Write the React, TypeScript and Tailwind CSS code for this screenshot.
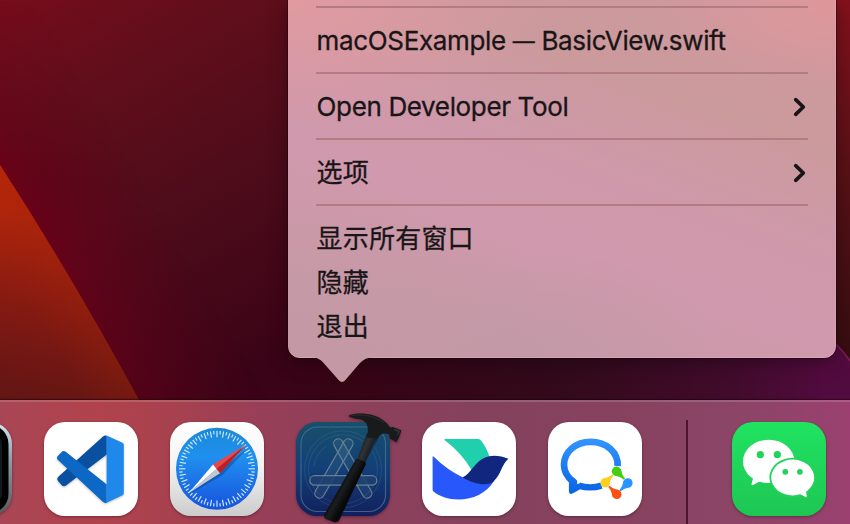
import type { ReactNode } from "react";

function Wallpaper() {
  return (
    <svg className="absolute inset-0" width="850" height="524" viewBox="0 0 850 524" aria-hidden="true">
      <defs>
        <linearGradient id="wall" gradientUnits="userSpaceOnUse" x1="0" y1="0" x2="230" y2="390">
          <stop offset="0" stopColor="#760c1c" />
          <stop offset="0.25" stopColor="#620e1b" />
          <stop offset="0.6" stopColor="#4e0c1a" />
          <stop offset="1" stopColor="#3a0317" />
        </linearGradient>
        <linearGradient id="crimson" gradientUnits="userSpaceOnUse" x1="50" y1="268" x2="155" y2="206">
          <stop offset="0" stopColor="#6c0019" stopOpacity="0.9" />
          <stop offset="1" stopColor="#5a0018" stopOpacity="0" />
        </linearGradient>
        <linearGradient id="crimsonMask" x1="0" y1="0" x2="0" y2="1">
          <stop offset="0" stopColor="#000" />
          <stop offset="0.4" stopColor="#fff" />
          <stop offset="0.6" stopColor="#fff" />
          <stop offset="1" stopColor="#888" />
        </linearGradient>
        <mask id="crimsonFade">
          <rect width="300" height="402" fill="url(#crimsonMask)" />
        </mask>
        <linearGradient id="orange" gradientUnits="userSpaceOnUse" x1="40" y1="215" x2="-10" y2="400">
          <stop offset="0" stopColor="#b92809" />
          <stop offset="0.5" stopColor="#8c1a13" />
          <stop offset="1" stopColor="#54121b" />
        </linearGradient>
        <linearGradient id="orangeLight" gradientUnits="userSpaceOnUse" x1="70" y1="275" x2="25" y2="303">
          <stop offset="0" stopColor="#b0240a" stopOpacity="0.6" />
          <stop offset="1" stopColor="#a02010" stopOpacity="0" />
        </linearGradient>
        <linearGradient id="orangeDark" gradientUnits="userSpaceOnUse" x1="0" y1="180" x2="130" y2="400">
          <stop offset="0" stopColor="#7c1a10" stopOpacity="0" />
          <stop offset="1" stopColor="#6a180f" stopOpacity="0.65" />
        </linearGradient>
        <linearGradient id="bottomStrip" gradientUnits="userSpaceOnUse" x1="288" y1="0" x2="850" y2="0">
          <stop offset="0" stopColor="#350415" stopOpacity="0" />
          <stop offset="0.1" stopColor="#350415" />
          <stop offset="0.5" stopColor="#330a1b" />
          <stop offset="0.8" stopColor="#420b2c" />
          <stop offset="1" stopColor="#560b43" />
        </linearGradient>
        <linearGradient id="rightStrip" x1="0" y1="0" x2="0" y2="1">
          <stop offset="0" stopColor="#84111d" />
          <stop offset="0.5" stopColor="#561116" />
          <stop offset="1" stopColor="#360d11" />
        </linearGradient>
      </defs>
      <rect width="850" height="524" fill="url(#wall)" />
      <rect width="300" height="402" fill="url(#crimson)" mask="url(#crimsonFade)" />
      <path d="M0 165 Q70 273 140 402 H0Z" fill="url(#orange)" />
      <path d="M0 165 Q70 273 140 402 H0Z" fill="url(#orangeLight)" />
      <path d="M0 165 Q70 273 140 402 H0Z" fill="url(#orangeDark)" />
      <rect x="288" y="340" width="562" height="70" fill="url(#bottomStrip)" />
      <rect x="820" width="30" height="362" fill="url(#rightStrip)" />
      <path d="M820 328 Q836 343 850 361 V402 H820Z" fill="#520b3e" />
      <path d="M834 342 Q843 351 851 362" fill="none" stroke="#831a5c" strokeWidth="1.6" />
    </svg>
  );
}

function Separator() {
  return (
    <div className="h-[22px] shrink-0 pt-[9px]">
      <div className="h-0.5 bg-[#b47b83]" />
    </div>
  );
}

function MenuRow({ children, submenu = false }: { children: ReactNode; submenu?: boolean }) {
  return (
    <div className="flex h-11 shrink-0 items-center justify-between whitespace-nowrap">
      <span className="pl-[0.6px]">{children}</span>
      {submenu && (
        <svg width="14" height="20" viewBox="0 0 14 20" className="mr-px" aria-hidden="true">
          <path d="M2.7 2.7 L10.3 10 L2.7 17.3" fill="none" stroke="#191517" strokeWidth="3.7" strokeLinecap="round" strokeLinejoin="round" />
        </svg>
      )}
    </div>
  );
}

function ContextMenu() {
  return (
    <div className="relative ml-[288px] flex h-[358px] w-[548px] flex-col rounded-b-[12px] bg-[radial-gradient(ellipse_260px_130px_at_0%_0%,#e19aa0_0%,#e19aa000_100%),radial-gradient(ellipse_180px_90px_at_100%_0%,#de979b_0%,#de979b00_100%),radial-gradient(ellipse_300px_170px_at_0%_100%,#c499a5_20%,#c499a500_100%),radial-gradient(ellipse_220px_110px_at_42%_100%,#c299a8_0%,#c299a800_100%),linear-gradient(20deg,#c799a5_0%,#d099ad_38%,#cf99ab_52%,#cb9a9d_72%,#cf999e_100%)] shadow-[0_0_0_1px_rgba(20,0,8,0.4),0_4px_20px_rgba(0,0,0,0.36),inset_0_-1px_0_rgba(255,220,230,0.2),inset_-1px_0_0_rgba(255,220,230,0.15)]">
      <svg className="absolute left-[24px] top-[357px]" width="62" height="27" viewBox="0 0 62 27" aria-hidden="true">
        <path d="M0 0 C6 .6 9 3 12 6.5 L26.6 23 Q30 27 33.4 23 L47.5 6.5 C51 2.7 55 .6 61 0Z" fill="#c499a5" />
      </svg>
      <div className="-mt-[3px] flex flex-col px-7 font-['Inter','Noto_Sans_CJK_SC',sans-serif] text-[26px] leading-[44px] text-[#191517] [-webkit-text-stroke:0.3px_#191517]">
        <Separator />
        <MenuRow>
          <span className="flex tracking-[-0.35px]">
            <span>macOSExample</span>
            <span className="mx-[7px] text-[22px]">—</span>
            <span>BasicView.swift</span>
          </span>
        </MenuRow>
        <Separator />
        <MenuRow submenu>
          <span className="tracking-[-0.36px]">Open Developer Tool</span>
        </MenuRow>
        <Separator />
        <MenuRow submenu>
          <span className="tracking-[0.2px]">选项</span>
        </MenuRow>
        <Separator />
        <MenuRow>
          <span className="tracking-[0.2px]">显示所有窗口</span>
        </MenuRow>
        <MenuRow>
          <span className="tracking-[0.2px]">隐藏</span>
        </MenuRow>
        <MenuRow>
          <span className="tracking-[0.2px]">退出</span>
        </MenuRow>
      </div>
    </div>
  );
}

const iconClass = "block shrink-0 overflow-visible drop-shadow-[0_1px_1.5px_rgba(30,0,15,0.4)]";

function PhoneIcon() {
  return (
    <svg className={iconClass} width="94" height="94" viewBox="0 0 94 94" aria-hidden="true">
      <defs>
        <linearGradient id="bezel" x1="0" y1="0" x2="0" y2="1">
          <stop offset="0" stopColor="#d3e7f0" />
          <stop offset="0.4" stopColor="#8f9da5" />
          <stop offset="1" stopColor="#55575b" />
        </linearGradient>
      </defs>
      <rect width="94" height="94" rx="22" fill="url(#bezel)" />
      <rect x="3" y="3" width="87.5" height="88" rx="19" fill="#000" />
      <rect x="9" y="9" width="75" height="76" rx="14" fill="#11191d" />
    </svg>
  );
}

function CodeIcon() {
  return (
    <svg className={iconClass} width="94" height="94" viewBox="0 0 94 94" aria-hidden="true">
      <rect width="94" height="94" rx="21" fill="#fff" />
      <g className="drop-shadow-[0_1px_1px_rgba(0,0,0,0.25)]">
        <path d="M62.8 13.8 Q60.8 13 59 14.6 L14 55 Q12.3 57 14 59 L18 63.5 Q20 65 22 63.5 L62.8 32.5Z" fill="#0a50a0" />
        <path d="M22 30 Q19.5 28.2 17.7 30 L13.8 34 Q12 36 14 38 L58.5 79.4 Q60.5 81.4 62.8 80.7 V62.5Z" fill="#0c67c5" />
        <path d="M62.6 13.6 L78.5 20.8 Q79.8 21.5 79.8 23 V71 Q79.8 72.6 78.5 73.3 L62.6 80.8Z" fill="#1f89eb" />
      </g>
    </svg>
  );
}

const ticks = Array.from({ length: 72 }, (_, i) => i);

function SafariIcon() {
  return (
    <svg className={iconClass} width="94" height="94" viewBox="0 0 94 94" aria-hidden="true">
      <defs>
        <linearGradient id="safariPlate" x1="0" y1="0" x2="0" y2="1">
          <stop offset="0" stopColor="#fff" />
          <stop offset="0.45" stopColor="#f4f4f4" />
          <stop offset="1" stopColor="#cccccd" />
        </linearGradient>
        <linearGradient id="safariDial" x1="0" y1="0" x2="0" y2="1">
          <stop offset="0" stopColor="#1b88d6" />
          <stop offset="0.35" stopColor="#2090ef" />
          <stop offset="1" stopColor="#1752dd" />
        </linearGradient>
      </defs>
      <rect width="94" height="94" rx="21" fill="url(#safariPlate)" />
      <circle cx="47" cy="46.8" r="41" fill="url(#safariDial)" />
      {ticks.map((i) => (
        <line
          key={i}
          x1="47"
          x2="47"
          y1="8.9"
          y2={i % 2 ? 12.2 : 15.2}
          stroke="#d0ebff"
          strokeWidth="1.15"
          transform={`rotate(${i * 5} 47 46.8)`}
        />
      ))}
      <path d="M21 71.5 L52.5 53 L79 25Z" fill="#062c70" opacity="0.35" />
      <path d="M76.3 22.6 L43 42.6 L46.6 47Z" fill="#ef4542" />
      <path d="M76.3 22.6 L46.6 47 L50 51.2Z" fill="#c21d1f" />
      <path d="M18.8 70.9 L43 42.6 L46.6 47Z" fill="#fff" />
      <path d="M18.8 70.9 L46.6 47 L50 51.2Z" fill="#c5c9cf" />
    </svg>
  );
}

function XcodeIcon() {
  return (
    <svg className={iconClass} width="94" height="94" viewBox="0 0 94 94" aria-hidden="true">
      <defs>
        <linearGradient id="xcodePlate" x1="0" y1="0" x2="0" y2="1">
          <stop offset="0" stopColor="#18506a" />
          <stop offset="0.5" stopColor="#123f78" />
          <stop offset="1" stopColor="#131f5c" />
        </linearGradient>
        <linearGradient id="steel" gradientUnits="userSpaceOnUse" x1="64" y1="20" x2="78" y2="26">
          <stop offset="0" stopColor="#161719" />
          <stop offset="0.45" stopColor="#303337" />
          <stop offset="1" stopColor="#141517" />
        </linearGradient>
        <linearGradient id="grip" gradientUnits="userSpaceOnUse" x1="45" y1="60" x2="56" y2="66">
          <stop offset="0" stopColor="#0b0c0e" />
          <stop offset="0.4" stopColor="#1c1d1f" />
          <stop offset="1" stopColor="#08090b" />
        </linearGradient>
      </defs>
      <rect width="94" height="94" rx="21" fill="url(#xcodePlate)" />
      <rect x="5" y="5" width="84.5" height="84.5" rx="16.5" fill="none" stroke="#487390" strokeOpacity="0.8" strokeWidth="1.1" />
      <g fill="none" stroke="#4f7c9c" strokeWidth="0.8" opacity="0.35">
        <circle cx="47" cy="47.3" r="38.5" />
        <circle cx="47" cy="47.3" r="34.5" />
        <path d="M18 44 Q20 30 31 24" />
      </g>
      <g fill="#4f809c" fillOpacity="0.16" stroke="#687f90" strokeWidth="1.2">
        <rect x="-4.7" y="-4.7" width="67" height="9.4" rx="4.7" transform="translate(52.3 21.5) rotate(120)" />
        <rect x="-4.7" y="-4.7" width="67" height="9.4" rx="4.7" transform="translate(42.3 21.5) rotate(60)" />
        <rect x="13.8" y="53.7" width="67" height="9.4" rx="4.7" fill="#1d4170" fillOpacity="0.85" />
      </g>
      <path d="M71 17 L83 15 L68 42 L45 91 L36 94Z" fill="#020714" opacity="0.4" />
      <path d="M71 11 L83.5 14 L78 19.5 L68.8 42 L60.2 39.5 Z" fill="url(#steel)" />
      <path d="M52.4 -6.1 C55 -8.5 66 -9.8 78 -6.5 C85 -4.2 91 .3 94.2 5.4 L96.8 5 L105.4 8.2 L103.2 15 L100.5 20.2 L93.7 16.5 L93 12.2 C87 10.6 84 11.8 81.4 16.4 L71 15.5 C73.4 6 71 -.5 65 -2.4 C61 -3.8 56 -3.2 52.4 -6.1Z" fill="#191a1c" />
      <path d="M55 -6.2 C65 -8.5 80 -6 88 1" fill="none" stroke="#3b3b3e" strokeWidth="1" opacity="0.5" />
      <path d="M98 7.6 L103.2 9.4 L101.6 13" fill="none" stroke="#303135" strokeWidth="1.6" />
      <path d="M59.2 38.4 Q60.4 36.2 62.4 37 L68.6 39.8 Q70.4 41 69.5 43 L43.8 97 Q42 101.2 37.8 99.9 L30.4 97.2 Q26.8 95.8 28.6 92Z" fill="url(#grip)" />
    </svg>
  );
}

function LarkIcon() {
  return (
    <svg className={iconClass} width="94" height="94" viewBox="0 0 94 94" aria-hidden="true">
      <rect width="94" height="94" rx="21" fill="#fff" />
      <path d="M22.8 18.2 Q21.6 17 23.3 17 H56.4 Q58 17 59 18.5 Q65 26 67.4 35 L50 48.8 Q40 31 22.8 18.2Z" fill="#20d0ad" />
      <path d="M10.6 34.8 Q10.8 33.8 11.8 34.8 Q25 48 41 55.5 L60 60 L72 59 C64 71.5 51 77.5 36.7 77.5 C26 77.5 17 74 11.5 69.5 Q10.6 69 10.6 67.5Z" fill="#2858fb" />
      <path d="M40.5 55.4 C49 51.5 52 41 62 36 C70 32.5 78 33.5 86.3 36.8 C80 42 79 52.5 72 59 C66 65 52 62 40.5 55.4Z" fill="#11277f" />
    </svg>
  );
}

const wecomDrops = [
  { color: "#43ce13", transform: "translate(68.5 49.2) rotate(-45)" },
  { color: "#2795ff", transform: "translate(79.9 60.9) rotate(45)" },
  { color: "#fb5010", transform: "translate(68.8 72.4) rotate(135)" },
  { color: "#ffcf20", transform: "translate(57.1 60.9) rotate(-135)" },
];

function WeComIcon() {
  return (
    <svg className={iconClass} width="94" height="94" viewBox="0 0 94 94" aria-hidden="true">
      <defs>
        <linearGradient id="wecomBlue" gradientUnits="userSpaceOnUse" x1="0" y1="17" x2="0" y2="70">
          <stop offset="0" stopColor="#3295ff" />
          <stop offset="1" stopColor="#0b65e5" />
        </linearGradient>
      </defs>
      <rect width="94" height="94" rx="21" fill="#fff" />
      <path d="M69.6 44 C70.5 30 58 19.9 42.8 19.9 C27.5 19.9 16 30 16 42.8 C16 49.5 19 55 25.5 60" fill="none" stroke="url(#wecomBlue)" strokeWidth="6.7" />
      <path d="M31 63.6 C39 66.2 46 65.9 53.5 63.6" fill="none" stroke="url(#wecomBlue)" strokeWidth="6.4" />
      <path d="M20.9 60.5 L20.4 57 L26.5 56.2 L28.6 58 Q29.6 59.2 29.2 60.6 L28.9 62 L33 61 V66.8 L25 71.2 Q21.2 73.2 20.9 69.5Z" fill="url(#wecomBlue)" />
      <circle cx="68.5" cy="60.7" r="10" fill="#fff" />
      {wecomDrops.map(({ color, transform }) => (
        <g key={color} fill={color} transform={transform}>
          <circle r="4.7" />
          <path d="M-4.5 1.2 C-3.2 4.6 -1.3 5.5 -.9 11.2 H.9 C1.3 5.5 3.2 4.6 4.5 1.2Z" />
        </g>
      ))}
    </svg>
  );
}

function WeChatIcon() {
  return (
    <svg className={iconClass} width="94" height="94" viewBox="0 0 94 94" aria-hidden="true">
      <defs>
        <linearGradient id="wechatPlate" x1="0" y1="0" x2="0" y2="1">
          <stop offset="0" stopColor="#20e361" />
          <stop offset="1" stopColor="#1ec653" />
        </linearGradient>
      </defs>
      <rect width="94" height="94" rx="21" fill="url(#wechatPlate)" />
      <ellipse cx="36.7" cy="39.4" rx="25.7" ry="21.7" fill="#fff" />
      <path d="M21 53 Q21.5 57 19.5 62 Q19.5 63.7 21 63 L29.5 58.5Z" fill="#fff" />
      <ellipse cx="60.7" cy="55.5" rx="23.3" ry="19.7" fill="#1fd45a" />
      <ellipse cx="60.7" cy="55.5" rx="21.5" ry="17.9" fill="#fff" />
      <path d="M67 71.5 L73.5 75 Q75 75.8 74.8 74 Q73.3 70 74.8 67Z" fill="#fff" />
      <g fill="#1fd45a">
        <circle cx="28.3" cy="32.7" r="3.6" />
        <circle cx="45.3" cy="32.7" r="3.6" />
        <circle cx="53.3" cy="49.8" r="2.9" />
        <circle cx="67.9" cy="49.8" r="2.9" />
      </g>
    </svg>
  );
}

function Dock() {
  return (
    <div className="relative flex h-[124px] shrink-0 border-t-2 border-white/15 bg-[linear-gradient(90deg,#a94655_0px,#b0434c_100px,#a6414f_180px,#983f58_260px,#8d405a_360px,#85425d_480px,#86425f_620px,#8c4567_740px,#9b4070_850px)] bg-origin-border pt-5 shadow-[0_-1px_1px_rgba(20,0,8,0.5)]">
      <div className="-ml-[82px] flex shrink-0 gap-8">
        <PhoneIcon />
        <CodeIcon />
        <SafariIcon />
        <XcodeIcon />
        <LarkIcon />
        <WeComIcon />
      </div>
      <div className="mx-11 -mt-0.5 h-[104px] w-0.5 shrink-0 bg-[#51142f]" />
      <WeChatIcon />
    </div>
  );
}

export default function App() {
  return (
    <div className="relative flex h-[524px] w-[850px] flex-col overflow-hidden bg-[#300516]">
      <Wallpaper />
      <div className="relative h-[400px] shrink-0">
        <ContextMenu />
      </div>
      <Dock />
    </div>
  );
}
